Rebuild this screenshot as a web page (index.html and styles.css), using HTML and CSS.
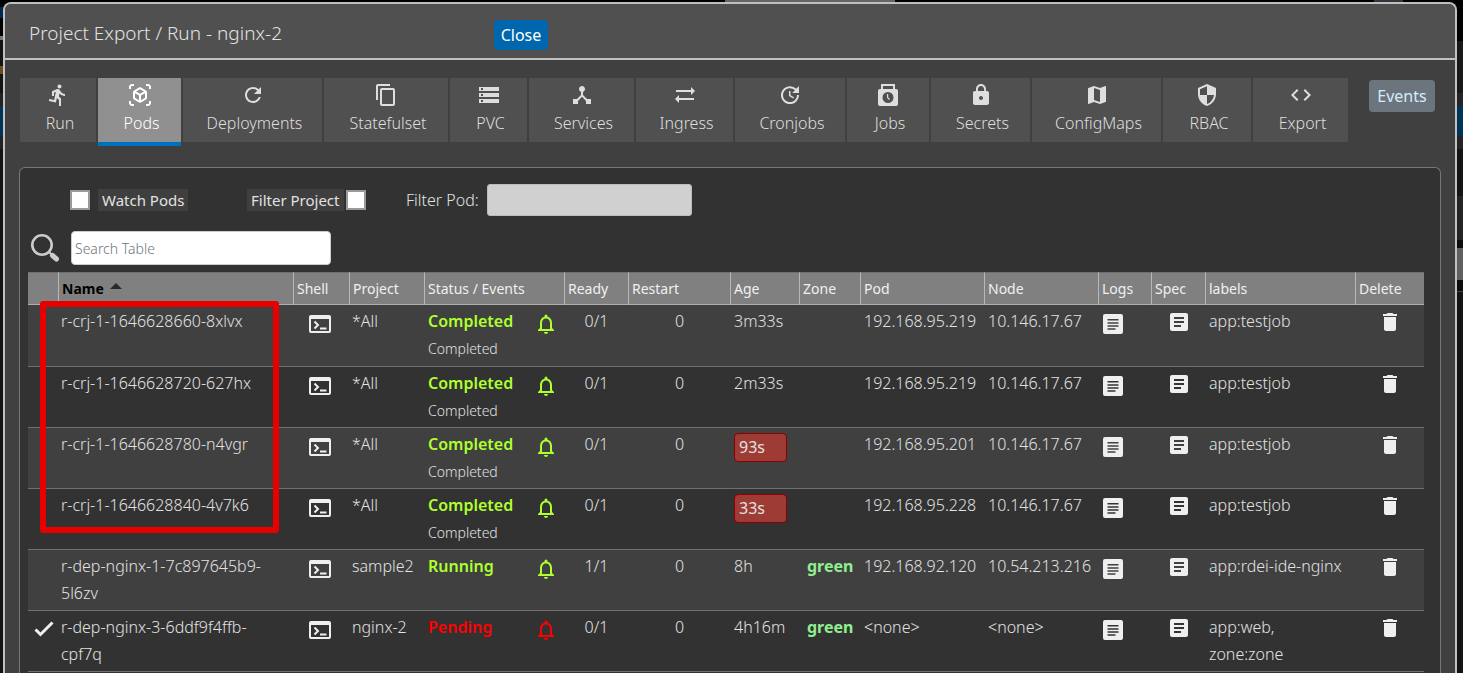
FILE: index.html
```
<!DOCTYPE html>
<html lang="en">
<head>
<meta charset="utf-8">
<title>Project Export / Run - nginx-2</title>
<link rel="stylesheet" href="styles.css">
</head>
<body>
<svg class="sprite" aria-hidden="true">
  <symbol id="i-run" viewBox="0 0 24 24"><path d="M13.49 5.48c1.1 0 2-.9 2-2s-.9-2-2-2-2 .9-2 2 .9 2 2 2zm-3.6 13.9l1-4.4 2.1 2v6h2v-7.5l-2.1-2 .6-3c1.3 1.5 3.3 2.5 5.5 2.5v-2c-1.9 0-3.5-1-4.3-2.4l-1-1.6c-.4-.6-1-1-1.7-1-.3 0-.5.1-.8.1l-5.2 2.2v4.7h2v-3.4l1.8-.7-1.6 8.1-4.9-1-.4 2 7 1.4z"/></symbol>
  <symbol id="i-pods" viewBox="0 0 24 24"><path d="M3 4c0-.55.45-1 1-1h2V1H4C2.34 1 1 2.34 1 4v2h2V4zm0 16v-2H1v2c0 1.660 1.34 3 3 3h2v-2H4c-.55 0-1-.45-1-1zM20 1h-2v2h2c.55 0 1 .45 1 1v2h2V4c0-1.66-1.340-3-3-3zm1 19c0 .55-.45 1-1 1h-2v2h2c1.660 0 3-1.34 3-3v-2h-2v2zm-2-5.130V9.130c0-.72-.38-1.380-1-1.730l-5-2.880c-.31-.18-.65-.27-1-.27s-.69.09-1 .27L6 7.390c-.62.36-1 1.020-1 1.740v5.740c0 .72.38 1.380 1 1.730l5 2.880c.31.18.65.27 1 .27s.69-.09 1-.27l5-2.880c.62-.350 1-1.010 1-1.730zm-8 2.300l-4-2.300v-4.630l4 2.330v4.600zm1-6.330L8.040 8.530 12 6.250l3.960 2.280L12 10.840zm5 4.030l-4 2.300v-4.600l4-2.330v4.630z"/></symbol>
  <symbol id="i-refresh" viewBox="0 0 24 24"><path d="M17.65 6.350C16.200 4.900 14.210 4 12 4c-4.420 0-7.990 3.580-7.990 8s3.570 8 7.990 8c3.730 0 6.840-2.550 7.730-6h-2.080c-.82 2.330-3.040 4-5.650 4-3.310 0-6-2.690-6-6s2.690-6 6-6c1.660 0 3.140.69 4.220 1.780L13 11h7V4l-2.350 2.350z"/></symbol>
  <symbol id="i-copy" viewBox="0 0 24 24"><path d="M16 1H4c-1.100 0-2 .9-2 2v14h2V3h12V1zm3 4H8c-1.100 0-2 .9-2 2v14c0 1.100.9 2 2 2h11c1.100 0 2-.9 2-2V7c0-1.100-.9-2-2-2zm0 16H8V7h11v14z"/></symbol>
  <symbol id="i-storage" viewBox="0 0 24 24"><path d="M2 20h20v-4H2v4zm2-3h2v2H4v-2zM2 4v4h20V4H2zm4 3H4V5h2v2zm-4 7h20v-4H2v4zm2-3h2v2H4v-2z"/></symbol>
  <symbol id="i-hub" viewBox="0 0 24 24"><path d="M17 16l-4-4V8.820C14.160 8.400 15 7.300 15 6c0-1.660-1.340-3-3-3S9 4.340 9 6c0 1.300.84 2.400 2 2.820V12l-4 4H3v5h5v-3.050l4-4.200 4 4.200V21h5v-5h-4z"/></symbol>
  <symbol id="i-swap" viewBox="0 0 24 24"><path d="M22 8l-4-4v3H3v2h15v3l4-4zM2 16l4 4v-3h15v-2H6v-3l-4 4z"/></symbol>
  <symbol id="i-update" viewBox="0 0 24 24"><path d="M21 10.120h-6.780l2.740-2.820c-2.730-2.700-7.150-2.800-9.880-.1-2.730 2.710-2.730 7.080 0 9.790s7.150 2.710 9.880 0C18.320 15.650 19 14.080 19 12.100h2c0 1.980-.88 4.550-2.640 6.290-3.510 3.480-9.210 3.480-12.720 0-3.500-3.470-3.530-9.110-.02-12.580s9.140-3.470 12.650 0L21 3v7.120zM12.500 8v4.250l3.500 2.080-.72 1.210L11 13V8h1.500z"/></symbol>
  <symbol id="i-jobs" viewBox="0 0 24 24"><path fill-rule="evenodd" d="M5 1h14v5h1a2 2 0 0 1 2 2v13a2 2 0 0 1-2 2H4a2 2 0 0 1-2-2V8a2 2 0 0 1 2-2h1V1zm2 2v3h10V3H7zm5 6a5.500 5.500 0 1 0 0 11 5.500 5.500 0 0 0 0-11zm-1 2h1.200v3.200l1.800 2-.9.8-2.100-2.300V11z"/></symbol>
  <symbol id="i-lock" viewBox="0 0 24 24"><path d="M18 8h-1V6c0-2.760-2.240-5-5-5S7 3.240 7 6v2H6c-1.100 0-2 .9-2 2v10c0 1.100.9 2 2 2h12c1.100 0 2-.9 2-2V10c0-1.100-.9-2-2-2zm-6 9c-1.100 0-2-.9-2-2s.9-2 2-2 2 .9 2 2-.9 2-2 2zm3.100-9H8.900V6c0-1.710 1.390-3.100 3.100-3.100 1.710 0 3.100 1.390 3.100 3.100v2z"/></symbol>
  <symbol id="i-map" viewBox="0 0 24 24"><path d="M20.500 3l-.16.03L15 5.100 9 3 3.360 4.900c-.21.07-.36.25-.36.48V20.500c0 .28.22.5.5.5l.16-.03L9 18.900l6 2.100 5.640-1.900c.21-.07.36-.25.36-.48V3.500c0-.28-.22-.5-.5-.5zM15 19l-6-2.110V5l6 2.110V19z"/></symbol>
  <symbol id="i-shield" viewBox="0 0 24 24"><path d="M12 1L3 5v6c0 5.550 3.840 10.740 9 12 5.160-1.260 9-6.450 9-12V5l-9-4zm0 10.990h7c-.53 4.120-3.280 7.790-7 8.940V12H5V6.300l7-3.110v8.800z"/></symbol>
  <symbol id="i-code" viewBox="0 0 24 24"><path d="M9.400 16.600L4.800 12l4.600-4.600L8 6l-6 6 6 6 1.400-1.400zm5.200 0l4.600-4.600-4.600-4.600L16 6l6 6-6 6-1.400-1.400z"/></symbol>
  <symbol id="i-search" viewBox="0 0 30 30"><circle cx="12" cy="12" r="9.700" fill="none" stroke="currentColor" stroke-width="2.600"/><path d="M22.500 22.500l4 3.500" stroke="currentColor" stroke-width="5" stroke-linecap="round"/><path d="M18.500 18.500l3 3" stroke="currentColor" stroke-width="2"/></symbol>
  <symbol id="i-shell" viewBox="0 0 22 18"><path fill-rule="evenodd" d="M2 0h18a2 2 0 0 1 2 2v14a2 2 0 0 1-2 2H2a2 2 0 0 1-2-2V2a2 2 0 0 1 2-2zm0 4v12h18V4H2z"/><path d="M5.500 6.500L9 10l-3.500 3.500M11 13.500h6.500" fill="none" stroke="currentColor" stroke-width="2"/></symbol>
  <symbol id="i-bell" viewBox="0 0 16 20"><path d="M8 20c1.100 0 2-.9 2-2H6c0 1.100.9 2 2 2zm6-6V9c0-3.100-1.600-5.600-4.500-6.300V2a1.500 1.500 0 0 0-3 0v.7C3.600 3.400 2 5.900 2 9v5l-2 2v1h16v-1l-2-2zm-2 1H4V9c0-2.500 1.500-4.500 4-4.500s4 2 4 4.500v6z"/></symbol>
  <symbol id="i-logs" viewBox="0 0 20 20"><path fill-rule="evenodd" d="M2 0h16a2 2 0 0 1 2 2v16a2 2 0 0 1-2 2H2a2 2 0 0 1-2-2V2a2 2 0 0 1 2-2zm2.500 5v1.500h11V5h-11zm0 3.200v1.500h11V8.200h-11zm0 3v1.500h11v-1.500h-11zm0 3.100v1.500h8v-1.500h-8z"/></symbol>
  <symbol id="i-spec" viewBox="3 3 18 18"><path d="M19 3H5c-1.100 0-2 .9-2 2v14c0 1.100.9 2 2 2h14c1.100 0 2-.9 2-2V5c0-1.100-.9-2-2-2zm-5 14H7v-2h7v2zm3-4H7v-2h10v2zm0-4H7V7h10v2z"/></symbol>
  <symbol id="i-trash" viewBox="5 3 14 18"><path d="M6 19c0 1.100.9 2 2 2h8c1.100 0 2-.9 2-2V7H6v12zM19 4h-3.500l-1-1h-5l-1 1H5v2h14V4z"/></symbol>
  <symbol id="i-check" viewBox="0 0 20 16"><path d="M1.500 8.500L6.500 13.500 18.500 1.500" fill="none" stroke="currentColor" stroke-width="3"/></symbol>
</svg>
<div class="edge edge-left"></div>
<main class="modal">
  <header class="modal-head">
    <h1 class="modal-title">Project Export / Run - nginx-2</h1>
    <button class="btn btn-close" type="button">Close</button>
  </header>
  <div class="modal-body">
    <div class="toolbar">
      <nav class="tabs">
        <button class="tab" type="button"><svg><use href="#i-run"/></svg><span>Run</span></button>
        <button class="tab active" type="button"><svg><use href="#i-pods"/></svg><span>Pods</span></button>
        <button class="tab" type="button"><svg><use href="#i-refresh"/></svg><span>Deployments</span></button>
        <button class="tab" type="button"><svg><use href="#i-copy"/></svg><span>Statefulset</span></button>
        <button class="tab" type="button"><svg><use href="#i-storage"/></svg><span>PVC</span></button>
        <button class="tab" type="button"><svg><use href="#i-hub"/></svg><span>Services</span></button>
        <button class="tab" type="button"><svg><use href="#i-swap"/></svg><span>Ingress</span></button>
        <button class="tab" type="button"><svg><use href="#i-update"/></svg><span>Cronjobs</span></button>
        <button class="tab" type="button"><svg><use href="#i-jobs"/></svg><span>Jobs</span></button>
        <button class="tab" type="button"><svg><use href="#i-lock"/></svg><span>Secrets</span></button>
        <button class="tab" type="button"><svg><use href="#i-map"/></svg><span>ConfigMaps</span></button>
        <button class="tab" type="button"><svg><use href="#i-shield"/></svg><span>RBAC</span></button>
        <button class="tab" type="button"><svg><use href="#i-code"/></svg><span>Export</span></button>
      </nav>
      <button class="btn btn-events" type="button">Events</button>
    </div>
    <section class="panel">
      <div class="filters">
        <div class="filter watch"><input class="check" type="checkbox" id="watch"><label class="tag" for="watch">Watch Pods</label></div>
        <div class="filter project"><label class="tag" for="project">Filter Project</label><input class="check" type="checkbox" id="project"></div>
        <div class="filter pod"><label class="pod-label" for="pod">Filter Pod:</label><input class="pod-input" type="text" id="pod"></div>
      </div>
      <div class="search">
        <svg class="search-icon"><use href="#i-search"/></svg>
        <input class="search-input" type="text" placeholder="Search Table" aria-label="Search Table">
      </div>
      <div class="table-wrap">
        <table class="pods">
          <colgroup>
            <col class="c-mark"><col class="c-name"><col class="c-shell"><col class="c-project"><col class="c-status"><col class="c-ready"><col class="c-restart"><col class="c-age"><col class="c-zone"><col class="c-pod"><col class="c-node"><col class="c-logs"><col class="c-spec"><col class="c-labels"><col class="c-delete">
          </colgroup>
          <thead>
            <tr><th></th><th class="sorted">Name<span class="sort-up"></span></th><th>Shell</th><th>Project</th><th>Status / Events</th><th>Ready</th><th>Restart</th><th>Age</th><th>Zone</th><th>Pod</th><th>Node</th><th>Logs</th><th>Spec</th><th>labels</th><th>Delete</th></tr>
          </thead>
          <tbody>
            <tr>
              <td></td><td>r-crj-1-1646628660-8xlvx</td><td><svg class="shell"><use href="#i-shell"/></svg></td><td>*All</td>
              <td><div class="status ok">Completed<svg class="bell"><use href="#i-bell"/></svg></div><div class="sub">Completed</div></td>
              <td class="mid">0/1</td><td class="mid">0</td><td>3m33s</td><td></td><td>192.168.95.219</td><td>10.146.17.67</td>
              <td><svg class="logs"><use href="#i-logs"/></svg></td><td class="mid"><svg class="spec"><use href="#i-spec"/></svg></td><td>app:testjob</td><td class="mid"><svg class="trash"><use href="#i-trash"/></svg></td>
            </tr>
            <tr>
              <td></td><td>r-crj-1-1646628720-627hx</td><td><svg class="shell"><use href="#i-shell"/></svg></td><td>*All</td>
              <td><div class="status ok">Completed<svg class="bell"><use href="#i-bell"/></svg></div><div class="sub">Completed</div></td>
              <td class="mid">0/1</td><td class="mid">0</td><td>2m33s</td><td></td><td>192.168.95.219</td><td>10.146.17.67</td>
              <td><svg class="logs"><use href="#i-logs"/></svg></td><td class="mid"><svg class="spec"><use href="#i-spec"/></svg></td><td>app:testjob</td><td class="mid"><svg class="trash"><use href="#i-trash"/></svg></td>
            </tr>
            <tr>
              <td></td><td>r-crj-1-1646628780-n4vgr</td><td><svg class="shell"><use href="#i-shell"/></svg></td><td>*All</td>
              <td><div class="status ok">Completed<svg class="bell"><use href="#i-bell"/></svg></div><div class="sub">Completed</div></td>
              <td class="mid">0/1</td><td class="mid">0</td><td><div class="young">93s</div></td><td></td><td>192.168.95.201</td><td>10.146.17.67</td>
              <td><svg class="logs"><use href="#i-logs"/></svg></td><td class="mid"><svg class="spec"><use href="#i-spec"/></svg></td><td>app:testjob</td><td class="mid"><svg class="trash"><use href="#i-trash"/></svg></td>
            </tr>
            <tr>
              <td></td><td>r-crj-1-1646628840-4v7k6</td><td><svg class="shell"><use href="#i-shell"/></svg></td><td>*All</td>
              <td><div class="status ok">Completed<svg class="bell"><use href="#i-bell"/></svg></div><div class="sub">Completed</div></td>
              <td class="mid">0/1</td><td class="mid">0</td><td><div class="young">33s</div></td><td></td><td>192.168.95.228</td><td>10.146.17.67</td>
              <td><svg class="logs"><use href="#i-logs"/></svg></td><td class="mid"><svg class="spec"><use href="#i-spec"/></svg></td><td>app:testjob</td><td class="mid"><svg class="trash"><use href="#i-trash"/></svg></td>
            </tr>
            <tr>
              <td></td><td>r-dep-nginx-1-7c897645b9-<wbr>5l6zv</td><td><svg class="shell"><use href="#i-shell"/></svg></td><td>sample2</td>
              <td><div class="status ok">Running<svg class="bell"><use href="#i-bell"/></svg></div></td>
              <td class="mid">1/1</td><td class="mid">0</td><td>8h</td><td class="zone">green</td><td>192.168.92.120</td><td>10.54.213.216</td>
              <td><svg class="logs"><use href="#i-logs"/></svg></td><td class="mid"><svg class="spec"><use href="#i-spec"/></svg></td><td>app:rdei-ide-nginx</td><td class="mid"><svg class="trash"><use href="#i-trash"/></svg></td>
            </tr>
            <tr>
              <td class="mark"><svg class="tick"><use href="#i-check"/></svg></td><td>r-dep-nginx-3-6ddf9f4ffb-<wbr>cpf7q</td><td><svg class="shell"><use href="#i-shell"/></svg></td><td>nginx-2</td>
              <td><div class="status bad">Pending<svg class="bell"><use href="#i-bell"/></svg></div></td>
              <td class="mid">0/1</td><td class="mid">0</td><td>4h16m</td><td class="zone">green</td><td>&lt;none&gt;</td><td>&lt;none&gt;</td>
              <td><svg class="logs"><use href="#i-logs"/></svg></td><td class="mid"><svg class="spec"><use href="#i-spec"/></svg></td><td>app:web,<br>zone:zone</td><td class="mid"><svg class="trash"><use href="#i-trash"/></svg></td>
            </tr>
          </tbody>
        </table>
        <div class="highlight"></div>
      </div>
    </section>
  </div>
</main>
<div class="edge edge-right"></div>
</body>
</html>
```

FILE: styles.css
```
* { box-sizing: border-box; }

body {
  margin: 0;
  padding-top: 2px;
  height: 100vh;
  overflow: hidden;
  display: flex;
  background: linear-gradient(90deg, #000 725px, #666 725px, #666 895px, #000 895px, #000 1374px, #33363c 1374px, #33363c 1403px, #000 1403px);
  color: #e2e2e2;
  font: 300 16px/27px "Noto Sans", "Open Sans", sans-serif;
}

button, input { font: inherit; color: inherit; }
svg { fill: currentColor; }
.sprite { position: absolute; width: 0; height: 0; }

.edge-left {
  flex: 0 0 3px;
  background: linear-gradient(#000 5px, #012a4a 5px, #012a4a 16px, #000 16px, #000 34px, #777 34px, #777 38px, #141414 38px, #141414 64px, #6b4d1d 64px, #6b4d1d 72px, #141414 72px, #141414 91px, #222 91px, #222 104px, #003358 104px, #003358 134px, #222 134px, #222 147px, #141414 147px);
}
.edge-right {
  flex: 0 0 6px;
  background: linear-gradient(#000 39px, #181818 39px, #181818 91px, #242424 91px, #242424 104px, #003358 104px, #003358 134px, #242424 134px, #242424 147px, #141414 147px, #141414 194px, #242424 194px, #242424 238px, #0c0c0c 238px, #0c0c0c 246px, #606060 246px, #606060 278px, #0c0c0c 278px, #0c0c0c 289px, #444 289px, #444 290px, #141414 290px);
}

.modal {
  flex: 1;
  min-width: 0;
  display: flex;
  flex-direction: column;
  border: 2px solid #c0c0c0;
  border-bottom: 0;
  border-radius: 8px 8px 0 0;
  background: #404040;
  overflow: hidden;
}
.modal-head {
  display: flex;
  align-items: center;
  height: 56px;
  padding: 4px 24px 0;
  border-bottom: 2px solid #c0c0c0;
  background: #505050;
}
.modal-title {
  width: 465px;
  margin: 0;
  font-size: 19px;
  font-weight: 300;
}
.btn { border: 0; border-radius: 4px; padding: 0; }
.btn-close { width: 54px; height: 30px; margin-top: 4px; background: #0066ad; color: #fff; font-weight: 400; }

.modal-body {
  flex: 1;
  display: flex;
  flex-direction: column;
  padding: 18px 14px 0;
}
.toolbar { display: flex; align-items: flex-start; padding: 0 6px 0 1px; gap: 21px; }
.tabs {
  flex: 1;
  display: grid;
  grid-template-columns: 76fr 83fr 139fr 124fr 77fr 105fr 97fr 110fr 82fr 99fr 129fr 88fr 95fr;
  gap: 2px;
}
.tab {
  height: 64px;
  padding: 5px 0 0;
  border: 0;
  background: #505050;
  display: flex;
  flex-direction: column;
  align-items: center;
  gap: 3px;
  color: #dedede;
}
.tab svg { width: 24px; height: 24px; }
.tab span { padding-left: 4px; }
.tab.active { background: #909090; color: #fff; box-shadow: 0 4px #0072bc; }
.btn-events { width: 66px; height: 32px; margin-top: 2px; background: #6c757d; color: #d4ecfa; font-weight: 400; }

.panel {
  flex: 1;
  margin-top: 25px;
  padding: 16px 16px 0 8px;
  border: 1px solid #777;
  border-bottom: 0;
  border-radius: 6px 6px 0 0;
  background: #323232;
}
.filters { display: flex; align-items: center; height: 32px; padding-left: 42px; }
.filter { display: flex; align-items: center; }
.watch { gap: 8px; width: 177px; }
.project { gap: 2px; width: 159px; }
.tag { padding: 0 4px; background: #3f3f3f; font-size: 15px; line-height: 22px; font-weight: 400; }
.check {
  appearance: none;
  width: 20px;
  height: 20px;
  margin: 0;
  border: 2px solid #999;
  background: #fff;
}
.pod-label { width: 81px; }
.pod-input {
  width: 205px;
  height: 32px;
  border: 1px solid #bbb;
  border-radius: 3px;
  background: #d0d0d0;
  color: #222;
}
.search { display: flex; align-items: center; gap: 11px; padding: 15px 0 7px 2px; }
.search-icon { width: 30px; height: 30px; color: #ccc; }
.search-input {
  width: 260px;
  height: 34px;
  padding: 0 3px;
  border: 1px solid #ccc;
  border-radius: 4px;
  background: #fff;
  color: #333;
  font-size: 14px;
}
.search-input::placeholder { color: #6c757d; opacity: 1; }

.table-wrap { position: relative; }
.pods { width: 100%; table-layout: fixed; border-collapse: separate; border-spacing: 0; }
.c-mark { width: 30px; }
.c-name { width: 235px; }
.c-shell { width: 56px; }
.c-project { width: 75px; }
.c-status { width: 140px; }
.c-ready { width: 64px; }
.c-restart { width: 102px; }
.c-age { width: 69px; }
.c-zone { width: 61px; }
.c-pod { width: 124px; }
.c-node { width: 114px; }
.c-logs { width: 53px; }
.c-spec { width: 54px; }
.c-delete { width: 69px; }
th {
  height: 33px;
  padding: 0 3px;
  border-top: 1px solid #707070;
  border-bottom: 1px solid #b0b0b0;
  border-left: 1px solid #b8b8b8;
  background: #808080;
  color: #f0f0f0;
  font-size: 14px;
  font-weight: 400;
  line-height: 20px;
  text-align: left;
  white-space: nowrap;
}
th:first-child { border-left: 0; }
.sorted { color: #000; font-weight: 700; }
.sort-up {
  display: inline-block;
  margin: 0 0 5px 6px;
  border: 6px solid transparent;
  border-top: 0;
  border-bottom-color: #2a2a2a;
}
td {
  height: 61px;
  padding: 3px 3px 3px 4px;
  border-bottom: 1px solid #707070;
  vertical-align: top;
  white-space: nowrap;
}
tbody tr:first-child td { height: 62px; }
td:nth-child(2) { padding: 3px 16px 3px 3px; white-space: normal; }
td:nth-child(4) { padding-left: 3px; }
tbody tr:nth-child(odd) { background: #404040; }
.mid { text-align: center; }
td svg { display: block; color: #efefef; }
.mid svg { margin: 0 auto; }
.status { display: flex; justify-content: space-between; padding-right: 7px; font-weight: 600; }
.status .bell { width: 16px; height: 20px; margin-top: 6px; color: inherit; }
.ok { color: #adff2f; }
.bad { color: #f00; }
.sub { font-size: 14px; }
.zone { padding-left: 8px; color: #90ee90; font-weight: 700; }
.mark { padding-left: 6px; }
.tick { width: 20px; height: 16px; margin-top: 7px; }
.shell { width: 22px; height: 18px; margin: 7px 0 0 12px; }
.logs { width: 20px; height: 20px; margin: 6px 0 0 1px; }
td .spec { width: 18px; height: 18px; margin-top: 5px; }
td .trash { width: 14px; height: 18px; margin-top: 5px; }
.young {
  width: 53px;
  height: 29px;
  margin-top: 2px;
  padding: 0 4px;
  border: 1px solid #8b0000;
  border-radius: 4px;
  background: #9e3b35;
  font-weight: 400;
}
.highlight {
  position: absolute;
  left: 12px;
  top: 29px;
  width: 239px;
  height: 232px;
  border: 6px solid #e60000;
  border-radius: 3px;
}
```
